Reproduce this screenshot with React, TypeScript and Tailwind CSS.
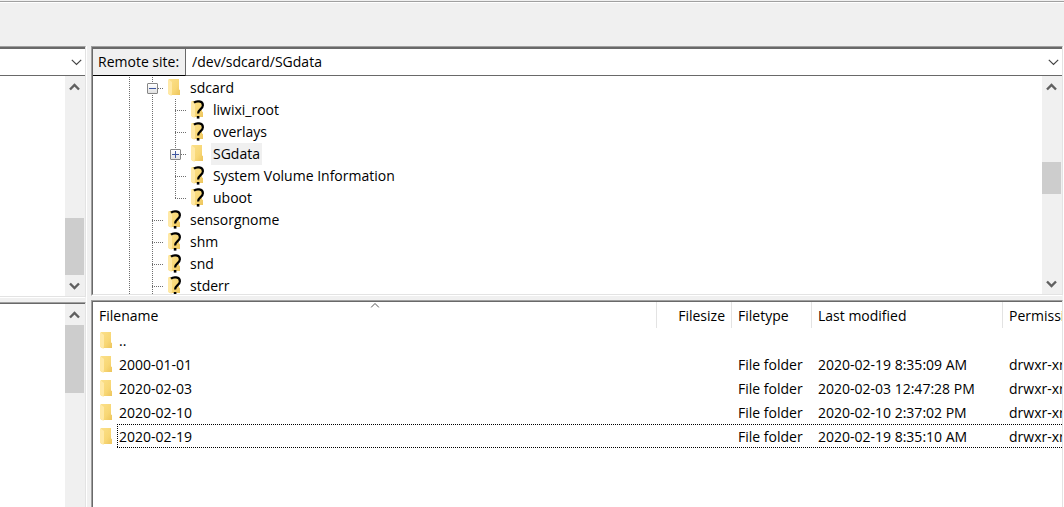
import type { ReactNode } from "react";

type NodeKind = "folder" | "unknown";
type Guide = "line" | "tee" | "end";

interface TreeNode {
  name: string;
  kind: NodeKind;
  guides: Guide[];
  expander?: "open" | "closed";
  selected?: boolean;
}

const tree: TreeNode[] = [
  { name: "sdcard", kind: "folder", guides: ["line", "tee"], expander: "open" },
  { name: "liwixi_root", kind: "unknown", guides: ["line", "line", "tee"] },
  { name: "overlays", kind: "unknown", guides: ["line", "line", "tee"] },
  { name: "SGdata", kind: "folder", guides: ["line", "line", "tee"], expander: "closed", selected: true },
  { name: "System Volume Information", kind: "unknown", guides: ["line", "line", "tee"] },
  { name: "uboot", kind: "unknown", guides: ["line", "line", "end"] },
  { name: "sensorgnome", kind: "unknown", guides: ["line", "tee"] },
  { name: "shm", kind: "unknown", guides: ["line", "tee"] },
  { name: "snd", kind: "unknown", guides: ["line", "tee"] },
  { name: "stderr", kind: "unknown", guides: ["line", "tee"] },
];

const files = [
  { name: "..", type: "", modified: "", permissions: "" },
  { name: "2000-01-01", type: "File folder", modified: "2020-02-19 8:35:09 AM", permissions: "drwxr-xr-x" },
  { name: "2020-02-03", type: "File folder", modified: "2020-02-03 12:47:28 PM", permissions: "drwxr-xr-x" },
  { name: "2020-02-10", type: "File folder", modified: "2020-02-10 2:37:02 PM", permissions: "drwxr-xr-x" },
  { name: "2020-02-19", type: "File folder", modified: "2020-02-19 8:35:10 AM", permissions: "drwxr-xr-x", focused: true },
];

function FolderIcon({ unknown = false }: { unknown?: boolean }) {
  return (
    <svg width="16" height="20" viewBox="0 0 16 20" className="shrink-0" aria-hidden="true">
      <defs>
        <linearGradient id="folder-body" x1="0" y1="0" x2="1" y2="1">
          <stop offset="0" stopColor="#fbe08a" />
          <stop offset="0.6" stopColor="#f8d775" />
          <stop offset="1" stopColor="#ecc45c" />
        </linearGradient>
      </defs>
      <path d="M1 1H11V11.5L12 12V17H1Z" fill="url(#folder-body)" />
      <path d="M0 1L4 4V13.5L3.6 18L0 16Z" fill="#ffe9a6" />
      {unknown && (
        <g fill="none" stroke="#000">
          <path d="M3 2.6C5 .8 11.9 .4 11.9 5.2C11.9 9 7.1 9.2 7.1 13.4" strokeWidth="2.2" />
          <path d="M7.1 16V18.6" strokeWidth="2.6" />
        </g>
      )}
    </svg>
  );
}

function GuideCell({ guide, expander }: { guide: Guide; expander?: "open" | "closed" }) {
  return (
    <span className="relative flex h-[22px] w-[23px] shrink-0">
      <svg width="23" height="22" viewBox="0 0 23 22" shapeRendering="crispEdges" stroke="#6e6e6e" strokeDasharray="1 1" aria-hidden="true">
        <path d={guide === "end" ? "M11.5 0V12" : "M11.5 0V22"} />
        {guide !== "line" && <path d="M11 11.5H23" />}
      </svg>
      {expander && (
        <button
          type="button"
          aria-label={expander === "open" ? "Collapse" : "Expand"}
          className="absolute top-1.5 left-1.5 size-[11px] rounded-[1px] border border-[#868686] bg-linear-to-b from-white to-[#e2e2e2]"
        >
          <svg width="9" height="9" viewBox="0 0 9 9" shapeRendering="crispEdges" stroke="#3f57a0" aria-hidden="true">
            <path d={expander === "open" ? "M1 4.5H8" : "M1 4.5H8M4.5 1V8"} />
          </svg>
        </button>
      )}
    </span>
  );
}

function ScrollArrow({ direction }: { direction: "up" | "down" }) {
  return (
    <button type="button" aria-label={`Scroll ${direction}`} className="flex h-[21px] w-full shrink-0 items-center justify-center">
      <svg width="11" height="8" viewBox="0 0 11 8" fill="none" stroke="#606060" strokeWidth="2.4" aria-hidden="true">
        <path d={direction === "up" ? "M1 6.5L5.5 2L10 6.5" : "M1 1.5L5.5 6L10 1.5"} />
      </svg>
    </button>
  );
}

function ScrollBar({ children, hasEnd = true }: { children: ReactNode; hasEnd?: boolean }) {
  return (
    <div className="flex w-5 shrink-0 flex-col bg-[#f0f0f0] pr-px">
      <ScrollArrow direction="up" />
      <div className="flex min-h-0 flex-1 flex-col">{children}</div>
      {hasEnd && <ScrollArrow direction="down" />}
    </div>
  );
}

function ComboBox({ id, value, label }: { id: string; value: string; label?: string }) {
  return (
    <div className="relative flex min-w-0 flex-1 border-b border-[#696969]">
      <select id={id} aria-label={label} className="w-full appearance-none bg-white px-1.5 outline-none">
        <option>{value}</option>
      </select>
      <svg width="11" height="7" viewBox="0 0 11 7" fill="none" stroke="#444" strokeWidth="1.2" className="pointer-events-none absolute top-2.5 right-[3px]" aria-hidden="true">
        <path d="M.8 .8L5.5 5.5L10.2 .8" />
      </svg>
    </div>
  );
}

const paneEdges = "border-t border-t-[#a0a0a0] border-r border-r-[#e3e3e3]";
const headCell = "border-r border-[#e3e3e3] px-1.5 pt-0.5 font-normal";
const bodyCell = "px-1.5 pt-0.5";

export default function App() {
  return (
    <div className="flex h-screen flex-col overflow-hidden bg-[#f0f0f0] font-['Open_Sans','Noto_Sans',sans-serif] text-[14px] leading-5 text-black">
      <div className="mt-px h-[45px] shrink-0 border-t border-[#a0a0a0]">
        <div className="h-px bg-white" />
      </div>

      <main className="flex min-h-0 flex-1 gap-1">
        <section className="flex w-[87px] shrink-0 flex-col gap-1 border-r border-white" aria-label="Local files">
          <div className={`flex h-[252px] shrink-0 flex-col border-b border-b-white ${paneEdges}`}>
            <div className="flex h-[29px] shrink-0 border-t-2 border-[#696969]">
              <ComboBox id="local-site" label="Local site" value="" />
            </div>
            <div className="flex min-h-0 flex-1 justify-end border-b border-[#e3e3e3] bg-white">
              <ScrollBar>
                <div className="mt-auto h-[57px] bg-[#cdcdcd]" />
              </ScrollBar>
            </div>
          </div>
          <div className={`flex min-h-0 flex-1 ${paneEdges}`}>
            <div className="flex flex-1 justify-end border-t border-[#696969] bg-white">
              <ScrollBar hasEnd={false}>
                <div className="h-[68px] bg-[#cdcdcd]" />
              </ScrollBar>
            </div>
          </div>
        </section>

        <section className="flex min-w-0 flex-1 flex-col gap-1 border-r border-white" aria-label="Remote files">
          <div className={`flex h-[250px] shrink-0 flex-col border-b border-l border-b-white border-l-[#a0a0a0] ${paneEdges}`}>
            <div className="flex h-[29px] shrink-0 border-t-2 border-l border-[#696969]">
              <label htmlFor="remote-site" className="flex items-center border-r border-b border-r-[#696969] border-b-black pr-1.5 pl-[5px]">
                Remote site:
              </label>
              <ComboBox id="remote-site" value="/dev/sdcard/SGdata" />
            </div>
            <div className="flex min-h-0 flex-1 border-b border-l border-b-[#e3e3e3] border-l-[#696969] bg-white">
              <ul className="min-w-0 flex-1 overflow-hidden pt-px pl-[25px]">
                {tree.map((node) => (
                  <li key={node.name} className="flex h-[22px] items-center">
                    {node.guides.map((guide, level) => (
                      <GuideCell key={level} guide={guide} expander={level === node.guides.length - 1 ? node.expander : undefined} />
                    ))}
                    <span className="flex w-6 shrink-0 pl-1">
                      <FolderIcon unknown={node.kind === "unknown"} />
                    </span>
                    <span className={`px-0.5 leading-[22px] ${node.selected ? "bg-[#f0f0f0]" : ""}`}>{node.name}</span>
                  </li>
                ))}
              </ul>
              <ScrollBar>
                <div className="mt-[65px] h-8 bg-[#cdcdcd]" />
              </ScrollBar>
            </div>
          </div>

          <div className={`flex min-h-0 flex-1 border-l border-l-[#a0a0a0] ${paneEdges}`}>
            <div className="min-w-0 flex-1 overflow-hidden border-t border-l border-[#696969] bg-white">
              <table className="w-full table-fixed border-separate border-spacing-0 text-left whitespace-nowrap">
                <colgroup>
                  <col />
                  <col className="w-[75px]" />
                  <col className="w-20" />
                  <col className="w-[191px]" />
                  <col className="w-[59px]" />
                </colgroup>
                <thead>
                  <tr className="h-[26px]">
                    <th className={`relative ${headCell}`}>
                      Filename
                      <svg width="9" height="5" viewBox="0 0 9 5" fill="none" stroke="#555" className="absolute top-px left-1/2 -translate-x-1/2" aria-hidden="true">
                        <path d="M.5 4.5L4.5 .5L8.5 4.5" />
                      </svg>
                    </th>
                    <th className={`text-right ${headCell}`}>Filesize</th>
                    <th className={headCell}>Filetype</th>
                    <th className={headCell}>Last modified</th>
                    <th className="pt-0.5 pl-1.5 font-normal">Permissions</th>
                  </tr>
                </thead>
                <tbody>
                  {files.map((file) => (
                    <tr key={file.name} className="relative h-6">
                      <td className="pt-0.5 pl-[7px]">
                        <span className="flex items-center">
                          <FolderIcon />
                          <span className="ml-[3px]">{file.name}</span>
                        </span>
                        {file.focused && (
                          <span className="pointer-events-none absolute inset-y-0 right-0 left-6">
                            <svg width="100%" height="100%" shapeRendering="crispEdges" stroke="#000" strokeDasharray="1 1" className="block" aria-hidden="true">
                              <line x1="0" y1="0.5" x2="100%" y2="0.5" />
                              <line x1="0" y1="23.5" x2="100%" y2="23.5" />
                              <line x1="0.5" y1="0" x2="0.5" y2="100%" />
                            </svg>
                          </span>
                        )}
                      </td>
                      <td />
                      <td className={bodyCell}>{file.type}</td>
                      <td className={bodyCell}>{file.modified}</td>
                      <td className="pt-0.5 pl-1.5">{file.permissions}</td>
                    </tr>
                  ))}
                </tbody>
              </table>
            </div>
          </div>
        </section>
      </main>
    </div>
  );
}
